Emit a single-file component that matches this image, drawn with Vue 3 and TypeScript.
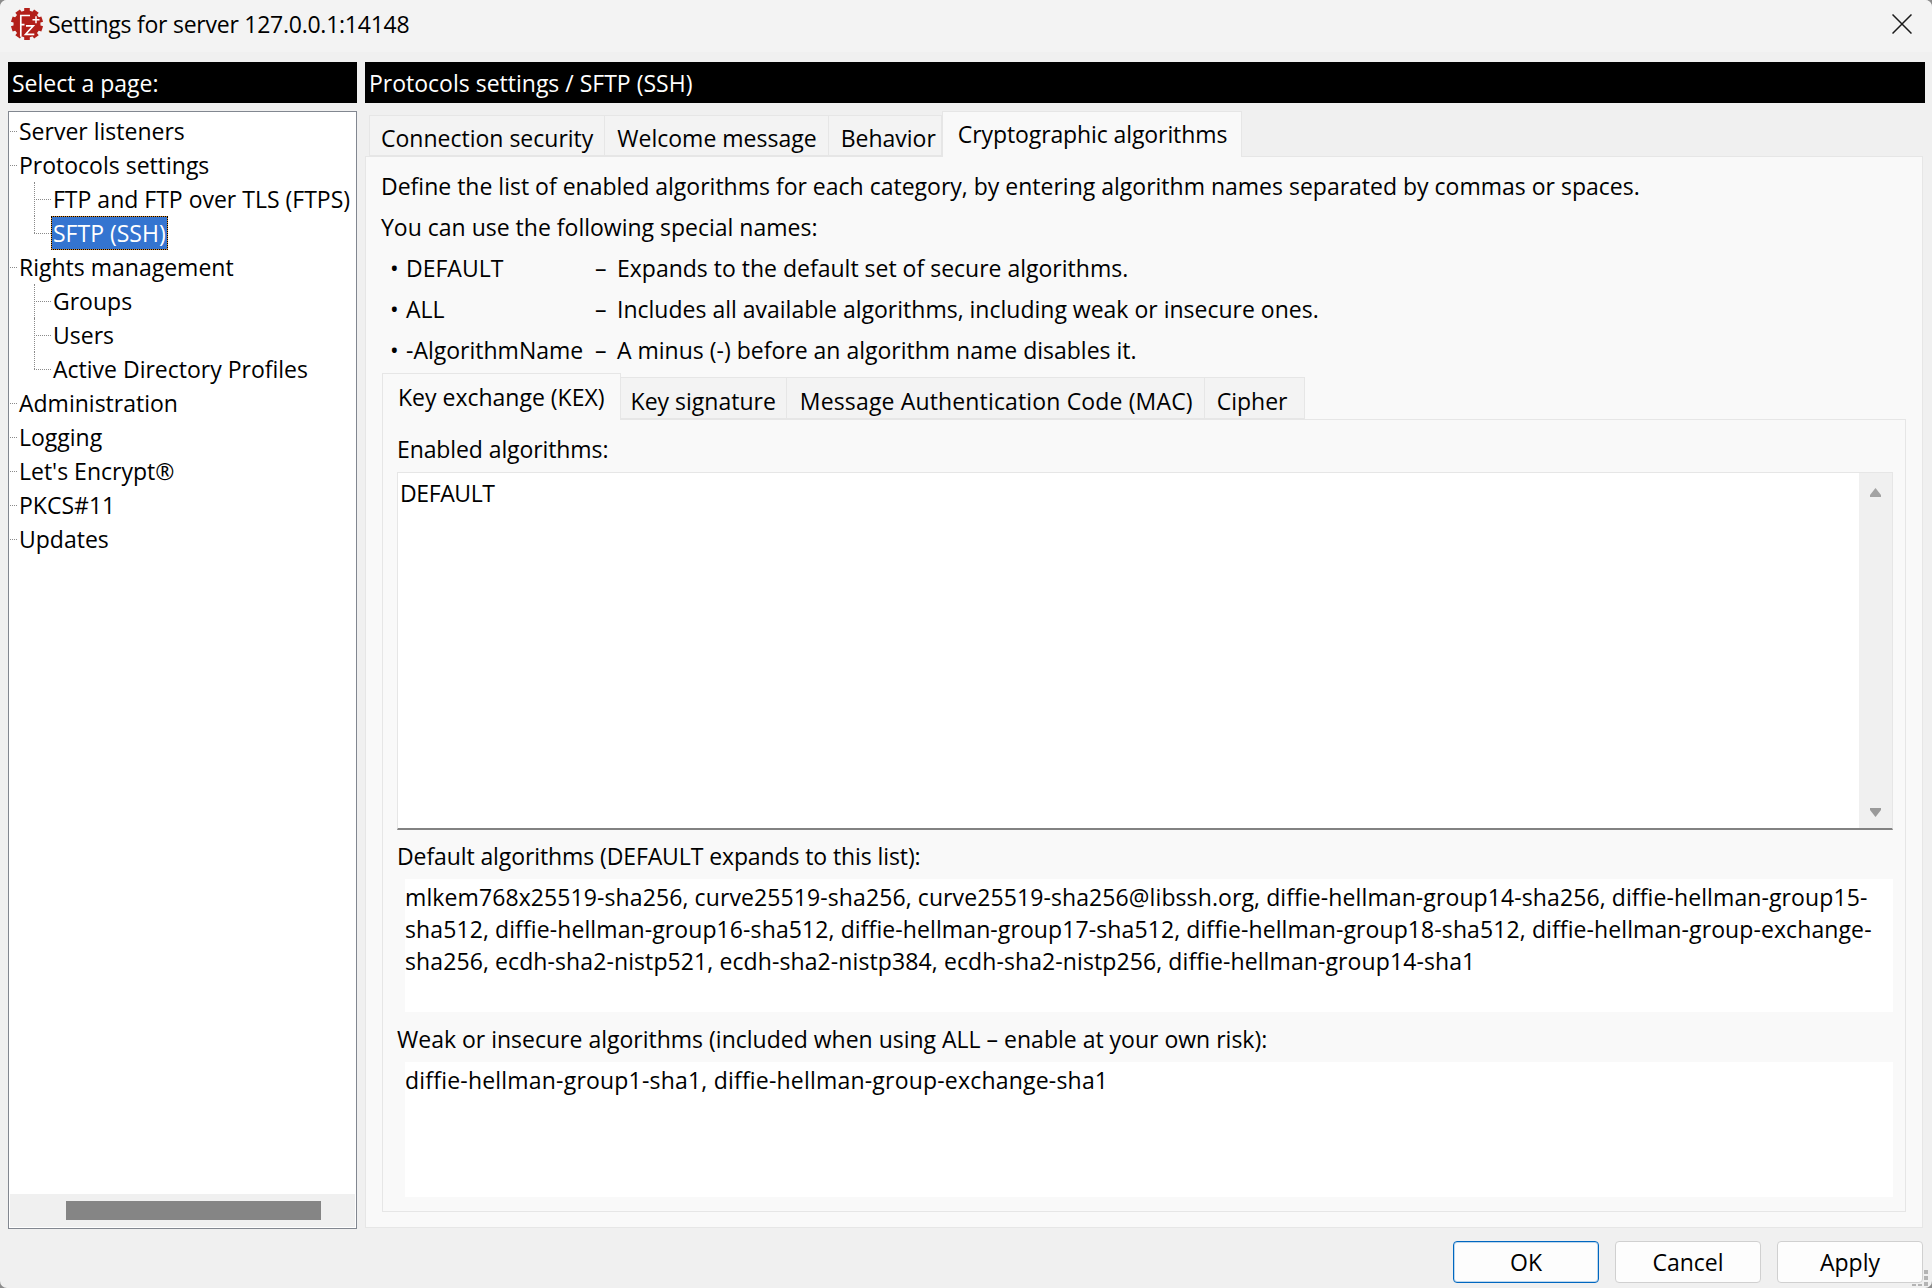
<template>
  <div class="dialog">
    <div class="titlebar">
      <svg class="logo" viewBox="0 0 34 34">
        <g fill="#b3201a">
          <circle cx="17" cy="17" r="13.5" />
          <rect v-for="a in teeth" :key="a" x="14.2" y="1" width="5.6" height="6" :transform="`rotate(${a} 17 17)`" />
        </g>
        <path d="M10.8 29.7V8.5H20M10.8 17.6H14.5M16 18.8H23.3L15.6 27.3H24.3" fill="none" stroke="#fff" stroke-width="1.7" />
        <path d="M26 9.2V16.2M22.5 12.7H29.5" fill="none" stroke="#fff" stroke-width="1.5" />
      </svg>
      <span class="title">Settings for server 127.0.0.1:14148</span>
      <svg class="close" viewBox="0 0 20 20"><path d="M0.5 0.5L19.5 19.5M19.5 0.5L0.5 19.5" stroke="#1a1a1a" stroke-width="1.5" /></svg>
    </div>
    <div class="main">
      <div class="left">
        <div class="head">Select a page:</div>
        <div class="tree">
          <div class="nodes">
            <div v-for="n in pages" :key="n.label" class="node" :class="{ sub: n.sub, last: n.last }">
              <span class="lab" :class="{ sel: n.sel }">{{ n.label }}</span>
            </div>
          </div>
          <div class="hscroll"><div class="thumb"></div></div>
        </div>
      </div>
      <div class="right">
        <div class="head">Protocols settings / SFTP (SSH)</div>
        <div class="tabs outer">
          <div v-for="t in outerTabs" :key="t" class="tab" :class="{ active: t === 'Cryptographic algorithms' }">{{ t }}</div>
        </div>
        <div class="panel">
          <p class="line intro">Define the list of enabled algorithms for each category, by entering algorithm names separated by commas or spaces.</p>
          <p class="line intro">You can use the following special names:</p>
          <div v-for="s in specials" :key="s.name" class="line special">
            <span class="bullet">•</span><span class="sname">{{ s.name }}</span><span class="dash">–</span><span>{{ s.text }}</span>
          </div>
          <div class="tabs inner">
            <div v-for="t in innerTabs" :key="t" class="tab" :class="{ active: t === 'Key exchange (KEX)' }">{{ t }}</div>
          </div>
          <div class="inner-panel">
            <div class="label">Enabled algorithms:</div>
            <div class="editor">
              <div class="edit-text">DEFAULT</div>
              <div class="vscroll">
                <svg viewBox="0 0 11 9"><path d="M5.5 0L11 7V9H0V7z" fill="#a3a3a3" /></svg>
                <svg viewBox="0 0 11 9"><path d="M0 0H11V2L5.5 9L0 2z" fill="#9a9a9a" /></svg>
              </div>
            </div>
            <div class="label second">Default algorithms (DEFAULT expands to this list):</div>
            <div class="ro big">mlkem768x25519-sha256, curve25519-sha256, curve25519-sha256@libssh.org, diffie-hellman-group14-sha256, diffie-hellman-group15-sha512, diffie-hellman-group16-sha512, diffie-hellman-group17-sha512, diffie-hellman-group18-sha512, diffie-hellman-group-exchange-sha256, ecdh-sha2-nistp521, ecdh-sha2-nistp384, ecdh-sha2-nistp256, diffie-hellman-group14-sha1</div>
            <div class="label third">Weak or insecure algorithms (included when using ALL – enable at your own risk):</div>
            <div class="ro small">diffie-hellman-group1-sha1, diffie-hellman-group-exchange-sha1</div>
          </div>
        </div>
      </div>
    </div>
    <div class="footer">
      <button class="btn primary">OK</button>
      <button class="btn">Cancel</button>
      <button class="btn">Apply</button>
      <svg class="grip" viewBox="0 0 18 18">
        <path d="M12 0h4v4h-4zM12 6h4v4h-4zM12 12h4v4h-4zM0 14h4v2H0zM6 14h4v2H6z" fill="#b4b4b4" />
      </svg>
    </div>
  </div>
</template>

<script setup lang="ts">
interface Page {
  label: string
  sub?: boolean
  sel?: boolean
  last?: boolean
}

const teeth = [0, 36, 72, 108, 144, 180, 216, 252, 288, 324]

const pages: Page[] = [
  { label: 'Server listeners' },
  { label: 'Protocols settings' },
  { label: 'FTP and FTP over TLS (FTPS)', sub: true },
  { label: 'SFTP (SSH)', sub: true, sel: true, last: true },
  { label: 'Rights management' },
  { label: 'Groups', sub: true },
  { label: 'Users', sub: true },
  { label: 'Active Directory Profiles', sub: true, last: true },
  { label: 'Administration' },
  { label: 'Logging' },
  { label: "Let's Encrypt®" },
  { label: 'PKCS#11' },
  { label: 'Updates' },
]

const outerTabs = ['Connection security', 'Welcome message', 'Behavior', 'Cryptographic algorithms']
const innerTabs = ['Key exchange (KEX)', 'Key signature', 'Message Authentication Code (MAC)', 'Cipher']

const specials = [
  { name: 'DEFAULT', text: 'Expands to the default set of secure algorithms.' },
  { name: 'ALL', text: 'Includes all available algorithms, including weak or insecure ones.' },
  { name: '-AlgorithmName', text: 'A minus (-) before an algorithm name disables it.' },
]
</script>

<style>
html, body { margin: 0; background: #8c8c8c; }
</style>

<style scoped>
.dialog {
  width: 1932px;
  height: 1288px;
  display: flex;
  flex-direction: column;
  background: #f0f0f0;
  border-radius: 7px;
  font-family: "Open Sans", "Noto Sans", sans-serif;
  font-size: 23px;
  color: #000;
  overflow: hidden;
}
.titlebar {
  height: 52px;
  flex: none;
  display: flex;
  align-items: center;
  padding: 0 20px 4px 10px;
  box-sizing: border-box;
  background: #f3f3f3;
}
.logo { width: 34px; height: 34px; margin-right: 4px; }
.title { flex: 1; letter-spacing: -0.25px; }
.close { width: 20px; height: 20px; }
.main {
  flex: 1;
  display: flex;
  gap: 8px;
  padding: 10px 7px 0 8px;
  min-height: 0;
}
.left { width: 349px; display: flex; flex-direction: column; }
.right { flex: 1; display: flex; flex-direction: column; min-width: 0; }
.head {
  height: 41px;
  line-height: 43px;
  background: #000;
  color: #fff;
  padding-left: 4px;
}
.tree {
  height: 1118px;
  margin-top: 8px;
  padding: 1px;
  background: #fff;
  border: 1px solid #828790;
  display: flex;
  flex-direction: column;
  box-sizing: border-box;
}
.nodes { flex: 1; padding-top: 1px; overflow: hidden; }
.node {
  position: relative;
  height: 34px;
  line-height: 34px;
  padding-left: 8px;
  white-space: nowrap;
}
.node::before {
  content: "";
  position: absolute;
  left: 0;
  top: 17px;
  width: 7px;
  border-top: 1px dotted #8a8a8a;
}
.node.sub { padding-left: 42px; }
.node.sub::before { left: 24px; width: 17px; }
.node.sub::after {
  content: "";
  position: absolute;
  left: 24px;
  top: 0;
  height: 34px;
  border-left: 1px dotted #8a8a8a;
}
.node.sub.last::after { height: 17px; }
.lab { padding: 0 1px; }
.lab.sel {
  display: inline-block;
  height: 32px;
  line-height: 32px;
  background: #3474d0;
  color: #fff;
  outline: 1px dotted #000;
  box-shadow: 0 0 0 1px #d98a2b;
}
.hscroll {
  height: 33px;
  flex: none;
  background: #f0f0f0;
  display: flex;
  align-items: center;
  padding-left: 56px;
}
.thumb { width: 255px; height: 19px; background: #858585; }
.tabs { display: flex; align-items: flex-end; position: relative; z-index: 1; }
.tab {
  height: 41px;
  line-height: 40px;
  padding: 2px 11px 0 12px;
  box-sizing: border-box;
  background: #f3f3f3;
  border: 1px solid #e6e6e6;
  border-left: none;
  white-space: nowrap;
}
.tab:first-child { border-left: 1px solid #e6e6e6; padding-left: 11px; }
.outer .tab:nth-child(3) { padding-right: 5px; }
.tab.active {
  height: 46px;
  padding: 2px 14px 0 15px;
  background: #f9f9f9;
  border-left: 1px solid #e6e6e6;
  border-bottom: none;
  margin-bottom: -1px;
  letter-spacing: -0.1px;
}
.outer { height: 53px; padding-left: 4px; }
.panel {
  flex: 1;
  margin: 0 2px 1px 0;
  background: #f9f9f9;
  border: 1px solid #e6e6e6;
  padding: 9px 16px 15px;
  display: flex;
  flex-direction: column;
  min-height: 0;
}
.line { margin: 0; height: 41px; line-height: 41px; white-space: nowrap; }
.intro { margin-left: -1px; }
.special { display: flex; }
.bullet { width: 24px; padding-left: 8px; box-sizing: border-box; }
.sname { width: 189px; }
.dash { width: 22px; }
.inner { height: 46px; margin-top: 2px; }
.inner .tab { height: 42px; padding-top: 3px; }
.inner .tab:nth-child(2) { padding: 3px 10px 0; }
.inner .tab:nth-child(3) { padding: 3px 11px 0 13px; letter-spacing: 0.15px; }
.inner .tab:nth-child(4) { padding: 3px 16px 0 12px; }
.inner .tab.active { height: 47px; padding: 3px 15px 0; letter-spacing: 0; }
.inner-panel {
  flex: 1;
  border: 1px solid #e6e6e6;
  padding: 12px 12px 0 14px;
  display: flex;
  flex-direction: column;
}
.label { height: 34px; line-height: 34px; flex: none; letter-spacing: -0.1px; }
.editor {
  height: 358px;
  flex: none;
  margin-top: 6px;
  box-sizing: border-box;
  background: #fff;
  border: 1px solid #e6e6e6;
  border-bottom: 2px solid #828282;
  display: flex;
}
.edit-text { flex: 1; padding: 3px 2px; line-height: 34px; letter-spacing: -0.4px; }
.vscroll {
  width: 33px;
  background: #f0f0f0;
  display: flex;
  flex-direction: column;
  justify-content: space-between;
  align-items: center;
  padding: 15px 0 11px;
  box-sizing: border-box;
}
.vscroll svg { width: 11px; height: 9px; }
.second { margin-top: 9px; }
.ro {
  flex: none;
  margin: 6px 0 0 8px;
  background: #fff;
  padding: 2px 0 0;
  line-height: 32px;
  box-sizing: border-box;
}
.big { height: 133px; letter-spacing: 0.1px; }
.third { margin-top: 10px; letter-spacing: 0; }
.small { height: 135px; letter-spacing: 0.2px; }
.footer {
  height: 59px;
  flex: none;
  position: relative;
  display: flex;
  justify-content: flex-end;
  gap: 16px;
  padding: 12px 9px 0 0;
  box-sizing: border-box;
}
.btn {
  width: 146px;
  height: 42px;
  font: inherit;
  color: #000;
  background: #fdfdfd;
  border: 1px solid #d0d0d0;
  border-radius: 4px;
}
.btn.primary {
  border-color: #0067c0;
  box-shadow: inset 0 0 0 1px rgba(0, 103, 192, 0.25);
}
.grip {
  position: absolute;
  right: 2px;
  bottom: 0;
  width: 18px;
  height: 18px;
}
</style>
